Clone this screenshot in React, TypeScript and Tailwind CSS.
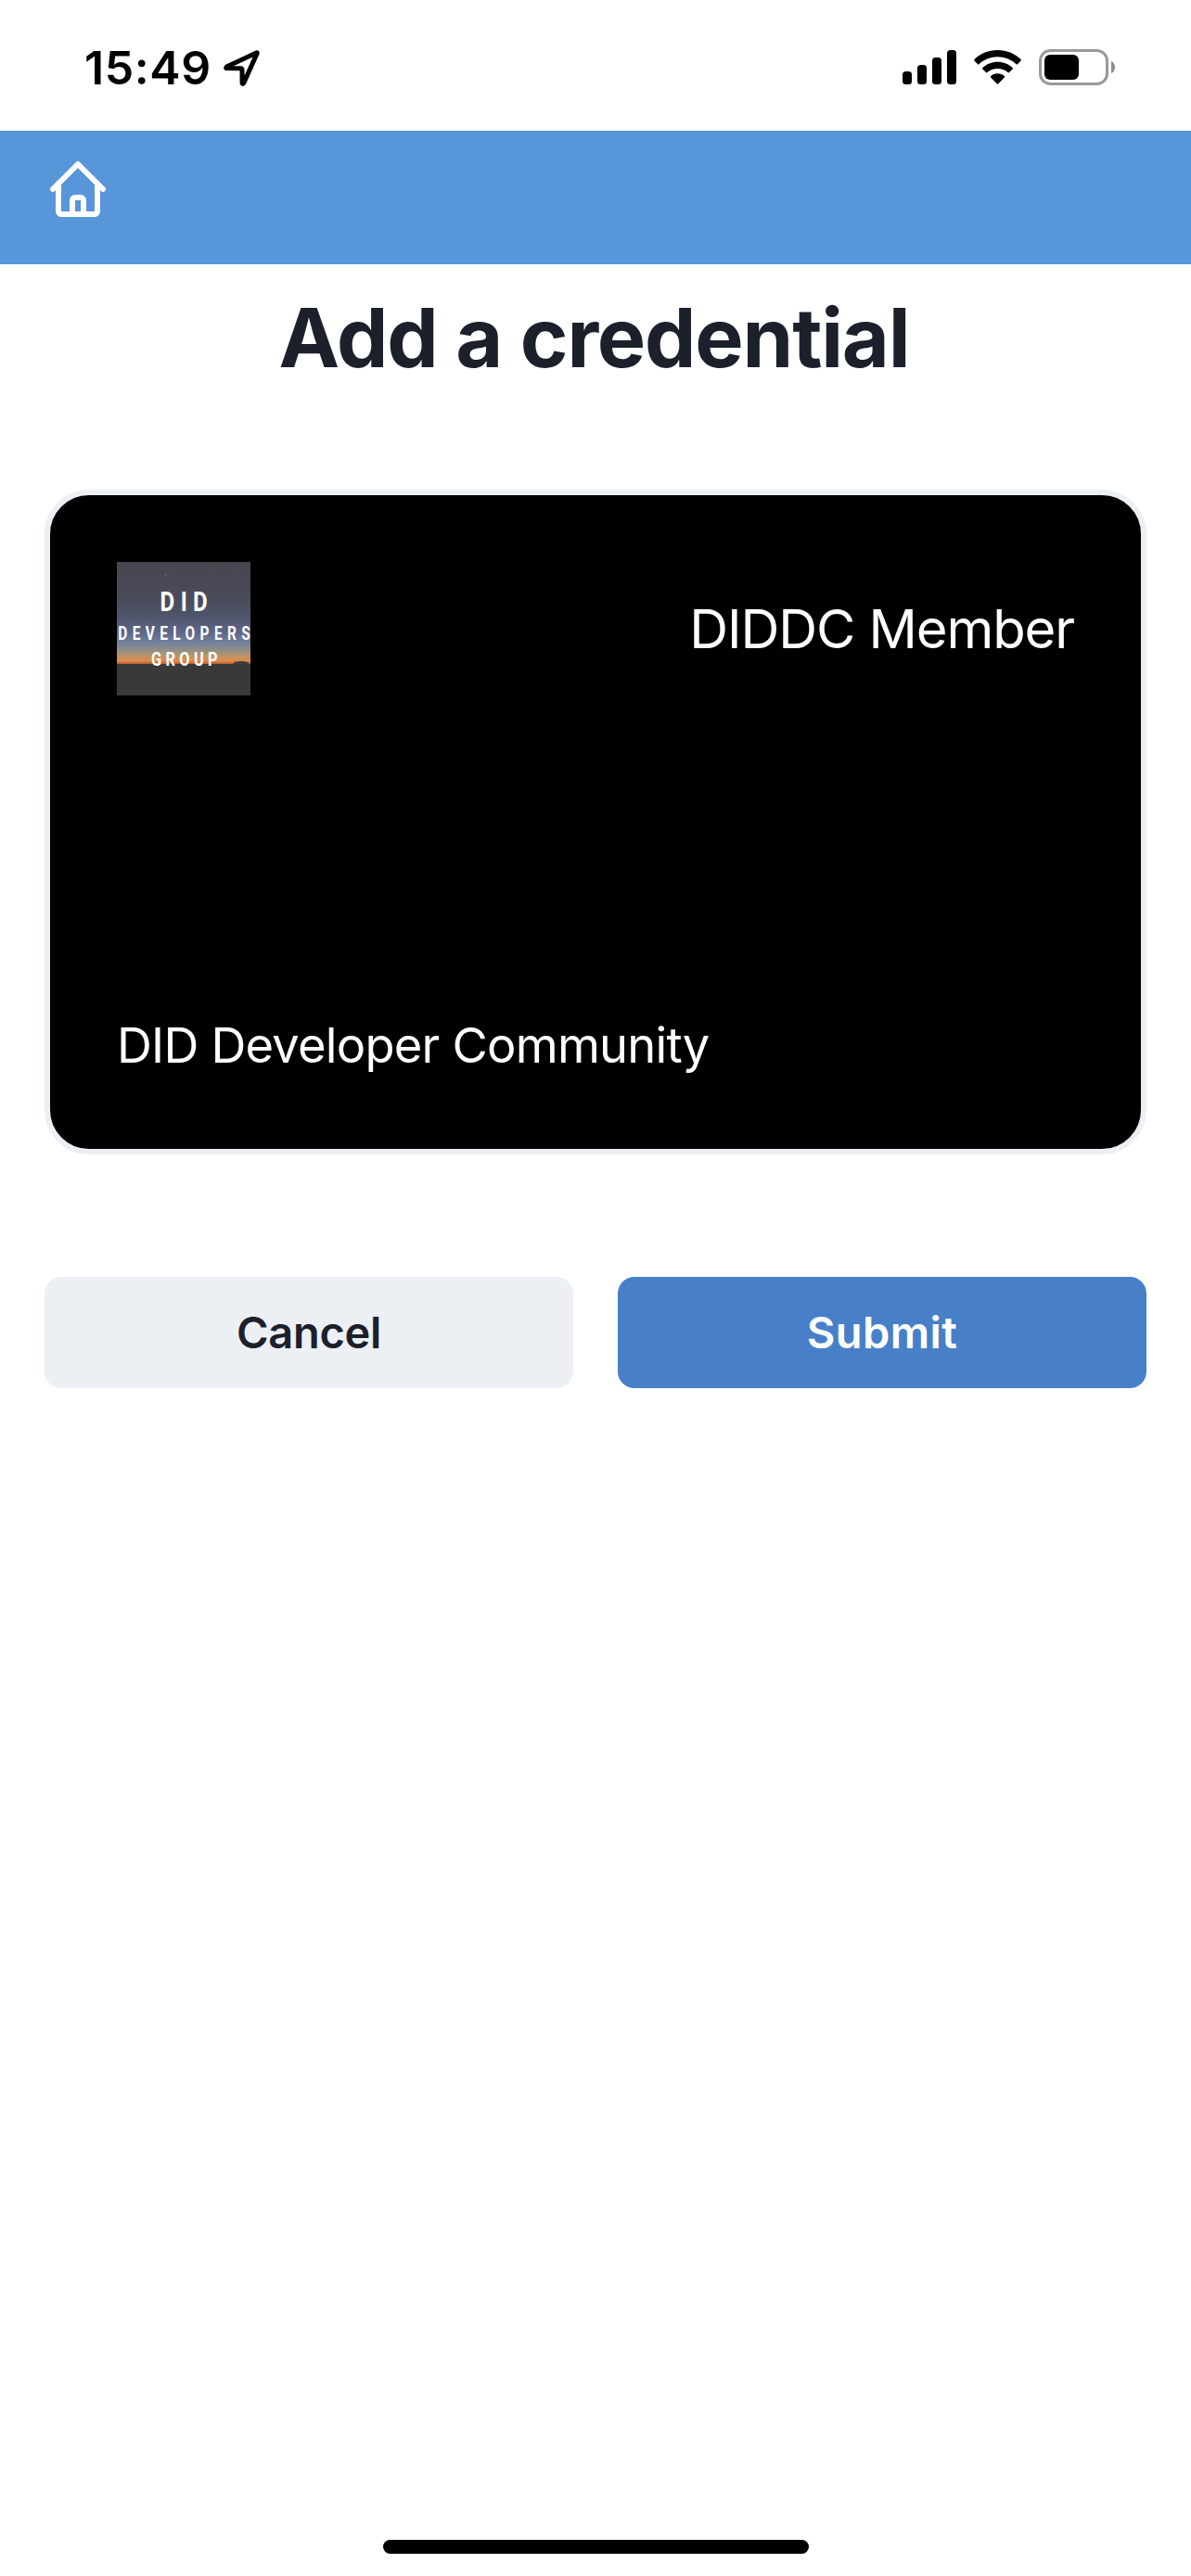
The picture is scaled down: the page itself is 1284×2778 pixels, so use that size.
function StatusBar() {
  return (
    <div className="flex h-[141px] shrink-0 items-start justify-between pr-[82px] pl-[91px]">
      <div className="flex items-center pt-[43px]">
        <span className="text-[50px] leading-[60px] font-semibold tracking-[0.6px] text-black">15:49</span>
        <svg className="ml-[12px] h-[42px] w-[42px]" viewBox="0 0 42 42" fill="none">
          <path
            d="M36.800 4.800 L4.600 19.800 Q2.800 21.500 4.800 21.600 L19.600 21.700 Q21 21.800 21 23.200 L21.100 37.600 Q21.500 39.300 22.700 37.600 L37.200 5.400 Q37.300 4.600 36.800 4.800 Z"
            stroke="black"
            strokeWidth="5"
            strokeLinejoin="round"
          />
        </svg>
      </div>
      <div className="flex items-start pt-[53px]">
        <svg className="mt-px h-[37px] w-[58px]" viewBox="0 0 58 37">
          <rect x="0" y="23" width="10" height="14" rx="3.500" />
          <rect x="16" y="16" width="10" height="21" rx="3.500" />
          <rect x="32" y="8" width="10" height="29" rx="3.500" />
          <rect x="48" y="0" width="10" height="37" rx="3.500" />
        </svg>
        <svg className="mt-px ml-[19px] h-[37px] w-[51px]" viewBox="0 0 51 37">
          <path d="M25.5 0C35 0 43.900 3.600 50.600 10.100C51 10.500 51 11.100 50.600 11.500L46.900 15.200C46.500 15.600 45.900 15.600 45.500 15.200C40.100 10.100 33 7.300 25.500 7.300C18 7.300 10.900 10.100 5.500 15.200C5.100 15.600 4.500 15.600 4.100 15.200L0.400 11.500C0 11.100 0 10.500 0.400 10.100C7.100 3.600 16 0 25.500 0Z" />
          <path d="M25.5 12.700C31.700 12.700 37.400 15.100 41.700 19C42.100 19.400 42.100 20 41.700 20.400L38 24.100C37.600 24.500 37 24.500 36.600 24.100C33.500 21.500 29.700 20 25.500 20C21.300 20 17.500 21.500 14.400 24.100C14 24.500 13.400 24.500 13 24.100L9.300 20.400C8.900 20 8.900 19.400 9.300 19C13.600 15.100 19.300 12.700 25.500 12.700Z" />
          <path d="M25.5 25.300C28.200 25.300 30.800 26.300 32.800 27.900C33.300 28.300 33.300 29 32.900 29.400L26.300 36.300C25.900 36.800 25.100 36.800 24.700 36.300L18.100 29.400C17.700 29 17.700 28.300 18.200 27.900C20.200 26.300 22.800 25.300 25.500 25.300Z" />
        </svg>
        <svg className="ml-[19px] h-[39px] w-[82px]" viewBox="0 0 82 39">
          <rect x="1.500" y="1.500" width="72" height="36" rx="11" fill="none" stroke="#999999" strokeWidth="3" />
          <rect x="6" y="6" width="37" height="27" rx="6" />
          <path d="M78 13C80.500 14 82 16.500 82 19.500S80.500 25 78 26Z" fill="#8c8c8c" />
        </svg>
      </div>
    </div>
  );
}

function NavBar() {
  return (
    <header className="h-[144px] shrink-0 bg-[#5896da] pt-[27px] pl-[48px]">
      <button aria-label="Home" className="block">
        <svg className="size-[72px]" viewBox="0 0 24 24" fill="none" stroke="white" strokeWidth="2" strokeLinecap="round" strokeLinejoin="round">
          <path d="M3 12l2-2m0 0l7-7 7 7M5 10v10a1 1 0 001 1h3m10-11l2 2m-2-2v10a1 1 0 01-1 1h-3m-6 0a1 1 0 001-1v-4a1 1 0 011-1h2a1 1 0 011 1v4a1 1 0 001 1m-6 0h6" />
        </svg>
      </button>
    </header>
  );
}

function GroupLogo() {
  return (
    <svg className="size-[144px]" viewBox="0 0 144 144" role="img" aria-label="DID Developers Group">
      <defs>
        <linearGradient id="dusk" x1="0" y1="0" x2="0" y2="110" gradientUnits="userSpaceOnUse">
          <stop offset="0" stopColor="#46464f" />
          <stop offset="0.35" stopColor="#494b58" />
          <stop offset="0.55" stopColor="#50556c" />
          <stop offset="0.7" stopColor="#5f698c" />
          <stop offset="0.8" stopColor="#75839c" />
          <stop offset="0.87" stopColor="#958f83" />
          <stop offset="0.92" stopColor="#b8956a" />
          <stop offset="0.97" stopColor="#e08a48" />
          <stop offset="1" stopColor="#b95b38" />
        </linearGradient>
      </defs>
      <rect width="144" height="110" fill="url(#dusk)" />
      <circle cx="52.500" cy="14" r="0.600" fill="#9a9aa2" />
      <path d="M125 110L127 108Q134 106 141 108L143 110Z" fill="#3f3d3f" />
      <rect y="110" width="144" height="34" fill="#3a3939" />
      <g className="font-['Roboto'] font-bold" fill="white">
        <text transform="translate(46.600 53) scale(0.820 1)" fontSize="29.500" textLength="62.500">DID</text>
        <text transform="translate(1.300 84.300) scale(0.760 1)" fontSize="20.400" textLength="187.500">DEVELOPERS</text>
        <text transform="translate(37 112.300) scale(0.800 1)" fontSize="20.400" textLength="89.500">GROUP</text>
      </g>
    </svg>
  );
}

function CredentialCard() {
  return (
    <section className="mt-[110px] flex h-[717px] flex-col justify-between rounded-[48px] border-6 border-[#ecf0f5] bg-black p-[72px] text-white">
      <div className="flex items-center justify-between">
        <GroupLogo />
        <p className="text-[58px] leading-[90px] tracking-[-1.1px]">DIDDC Member</p>
      </div>
      <p className="text-[52.5px] leading-[80px] tracking-[-0.8px]">DID Developer Community</p>
    </section>
  );
}

export default function App() {
  return (
    <div className="flex h-[2778px] w-[1284px] flex-col overflow-hidden bg-white font-['Inter',sans-serif] text-[#1c202b]">
      <StatusBar />
      <NavBar />
      <main className="flex flex-1 flex-col px-[48px] pt-[25px]">
        <h1 className="pr-[3px] text-center text-[88px] leading-[108px] font-bold tracking-[-1.2px]">Add a credential</h1>
        <CredentialCard />
        <div className="mt-[132px] grid grid-cols-2 gap-[48px]">
          <button className="h-[120px] rounded-[18px] bg-[#ecf0f5] text-[47px] font-semibold tracking-[-0.3px]">Cancel</button>
          <button className="h-[120px] rounded-[18px] bg-[#4780c8] text-[47px] font-semibold tracking-[0.4px] text-white">Submit</button>
        </div>
      </main>
      <div className="mb-[24px] h-[15px] w-[459px] self-center rounded-full bg-black" />
    </div>
  );
}
